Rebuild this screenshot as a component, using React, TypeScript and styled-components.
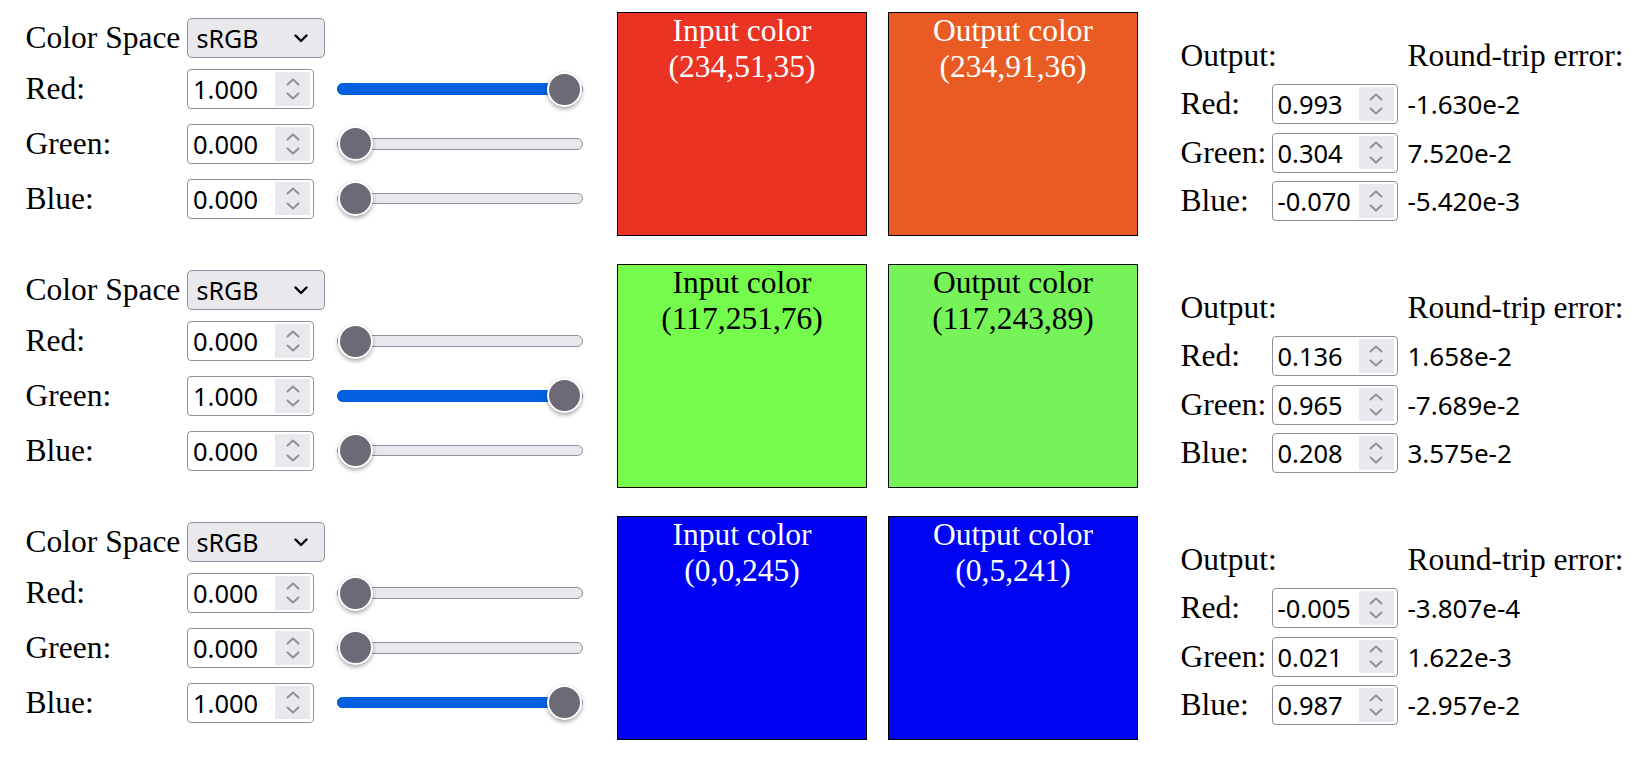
import styled, { createGlobalStyle } from "styled-components";

const channels = ["Red", "Green", "Blue"];

const sections = [
  {
    space: "sRGB",
    input: [1, 0, 0],
    inputRgb: [234, 51, 35],
    outputRgb: [234, 91, 36],
    output: ["0.993", "0.304", "-0.070"],
    error: ["-1.630e-2", "7.520e-2", "-5.420e-3"],
    light: true,
  },
  {
    space: "sRGB",
    input: [0, 1, 0],
    inputRgb: [117, 251, 76],
    outputRgb: [117, 243, 89],
    output: ["0.136", "0.965", "0.208"],
    error: ["1.658e-2", "-7.689e-2", "3.575e-2"],
    light: false,
  },
  {
    space: "sRGB",
    input: [0, 0, 1],
    inputRgb: [0, 0, 245],
    outputRgb: [0, 5, 241],
    output: ["-0.005", "0.021", "0.987"],
    error: ["-3.807e-4", "1.622e-3", "-2.957e-2"],
    light: true,
  },
];

const GlobalStyle = createGlobalStyle`
  body {
    margin: 0;
    background: #ffffff;
    color: #000000;
    font-family: "Liberation Serif", "Times New Roman", serif;
  }
`;

function Chevron({ up }: { up?: boolean }) {
  return (
    <svg width="14" height="8" viewBox="0 0 14 8">
      <path
        d={up ? "M1.5 6.5 L7 1.5 L12.5 6.5" : "M1.5 1.5 L7 6.5 L12.5 1.5"}
        fill="none"
        stroke="#8f8f9d"
        strokeWidth="2"
        strokeLinecap="round"
        strokeLinejoin="round"
      />
    </svg>
  );
}

function NumberField({ value, width }: { value: string; width: number }) {
  return (
    <NumberBox $width={width}>
      <NumberValue>{value}</NumberValue>
      <Spinner>
        <Chevron up />
        <Chevron />
      </Spinner>
    </NumberBox>
  );
}

function Range({ value }: { value: number }) {
  const thumbLeft = 1 + value * 208.7;
  return (
    <Slider>
      <Track>
        {value > 0 && <Fill style={{ width: thumbLeft + 18 }} />}
      </Track>
      <Thumb style={{ left: thumbLeft }} />
    </Slider>
  );
}

export default function App() {
  return (
    <>
      <GlobalStyle />
      <Page>
        {sections.map((s, i) => (
          <Section key={i}>
            <Controls>
              <SpaceRow>
                <Label>Color Space</Label>
                <Select>
                  <span>{s.space}</span>
                  <svg width="14" height="9" viewBox="0 0 14 9">
                    <path
                      d="M1.5 1.5 L7 7 L12.5 1.5"
                      fill="none"
                      stroke="#000"
                      strokeWidth="2.4"
                      strokeLinecap="round"
                      strokeLinejoin="round"
                    />
                  </svg>
                </Select>
              </SpaceRow>
              {channels.map((c, j) => (
                <FieldRow key={c}>
                  <Label>{c}:</Label>
                  <NumberField value={s.input[j].toFixed(3)} width={127} />
                  <Range value={s.input[j]} />
                </FieldRow>
              ))}
            </Controls>
            <Swatches>
              <ColorBox $bg={`rgb(${s.inputRgb.join(",")})`} $light={s.light}>
                Input color
                <br />({s.inputRgb.join(",")})
              </ColorBox>
              <ColorBox $bg={`rgb(${s.outputRgb.join(",")})`} $light={s.light}>
                Output color
                <br />({s.outputRgb.join(",")})
              </ColorBox>
            </Swatches>
            <Results>
              <ResultHeader>
                <HeaderTitle>Output:</HeaderTitle>
                <ErrorTitle>Round-trip error:</ErrorTitle>
              </ResultHeader>
              {channels.map((c, j) => (
                <ResultRow key={c}>
                  <ResultLabel>{c}:</ResultLabel>
                  <NumberField value={s.output[j]} width={126} />
                  <ErrorValue>{s.error[j]}</ErrorValue>
                </ResultRow>
              ))}
            </Results>
          </Section>
        ))}
      </Page>
    </>
  );
}

const Page = styled.main`
  display: flex;
  flex-direction: column;
  gap: 28px;
  padding: 11.5px 0 0 25.5px;
`;

const Section = styled.section`
  display: flex;
  align-items: flex-start;
  height: 224px;
`;

const Controls = styled.div`
  display: flex;
  flex-direction: column;
  gap: 14.75px;
  width: 557.5px;
  margin-right: 34px;
  padding-top: 6.5px;
`;

const FieldRow = styled.div`
  display: flex;
  align-items: center;
  height: 40px;
`;

const SpaceRow = styled(FieldRow)`
  margin-bottom: -3.75px;
`;

const Label = styled.span`
  flex: none;
  width: 161.5px;
  font-size: 31.5px;
  white-space: nowrap;
`;

const Select = styled.div`
  box-sizing: border-box;
  display: flex;
  align-items: center;
  justify-content: space-between;
  width: 138px;
  height: 40px;
  padding: 0 16px 0 8.5px;
  border: 1px solid #8f8f9d;
  border-radius: 5px;
  background: #e9e9ed;
  font-family: "Noto Sans", "Open Sans", sans-serif;
  font-size: 25px;
`;

const NumberBox = styled.div<{ $width: number }>`
  box-sizing: border-box;
  flex: none;
  display: flex;
  align-items: center;
  width: ${(p) => p.$width}px;
  height: 40px;
  padding: 0 3px 0 5px;
  border: 1px solid #8f8f9d;
  border-radius: 4px;
  background: #ffffff;
  font-family: "Noto Sans", "Open Sans", sans-serif;
  font-size: 25.5px;
`;

const NumberValue = styled.span`
  flex: 1;
  min-width: 0;
  overflow: hidden;
  white-space: nowrap;
`;

const Spinner = styled.span`
  flex: none;
  display: flex;
  flex-direction: column;
  align-items: center;
  justify-content: center;
  gap: 6.5px;
  width: 35px;
  height: 33.5px;
  background: #e9e9ed;
`;

const Slider = styled.div`
  position: relative;
  display: flex;
  align-items: center;
  width: 246px;
  height: 40px;
  margin-left: 23px;
`;

const Track = styled.div`
  position: relative;
  box-sizing: border-box;
  width: 100%;
  height: 11.5px;
  border: 1px solid #8f8f9d;
  border-radius: 6px;
  background: #e9e9ed;
`;

const Fill = styled.div`
  position: absolute;
  left: -1px;
  top: -1px;
  bottom: -1px;
  border-radius: 6px;
  background: #0060df;
`;

const Thumb = styled.div`
  position: absolute;
  top: 50%;
  box-sizing: border-box;
  width: 35px;
  height: 35px;
  margin-top: -17.5px;
  border: 2px solid #ffffff;
  border-radius: 50%;
  background: #6b6a76;
  box-shadow: 0 2px 4px rgba(0, 0, 0, 0.35);
`;

const Swatches = styled.div`
  display: flex;
  gap: 21px;
`;

const ColorBox = styled.div<{ $bg: string; $light: boolean }>`
  box-sizing: border-box;
  width: 250px;
  height: 224px;
  border: 1px solid #000000;
  background: ${(p) => p.$bg};
  color: ${(p) => (p.$light ? "#ffffff" : "#000000")};
  font-size: 31.5px;
  text-align: center;
`;

const Results = styled.div`
  display: flex;
  flex-direction: column;
  gap: 8.5px;
  margin: 26.5px 0 0 42.5px;
`;

const ResultHeader = styled.div`
  display: flex;
  margin-bottom: 1.5px;
  font-size: 31.5px;
  white-space: nowrap;
`;

const HeaderTitle = styled.span`
  width: 217px;
`;

const ErrorTitle = styled.span`
  padding-left: 10px;
`;

const ResultRow = styled.div`
  display: flex;
  align-items: center;
  height: 40px;
`;

const ResultLabel = styled.span`
  flex: none;
  width: 91px;
  font-size: 31.5px;
  white-space: nowrap;
`;

const ErrorValue = styled.span`
  padding-left: 10px;
  font-family: "Noto Sans", "Open Sans", sans-serif;
  font-size: 26px;
  white-space: nowrap;
`;
